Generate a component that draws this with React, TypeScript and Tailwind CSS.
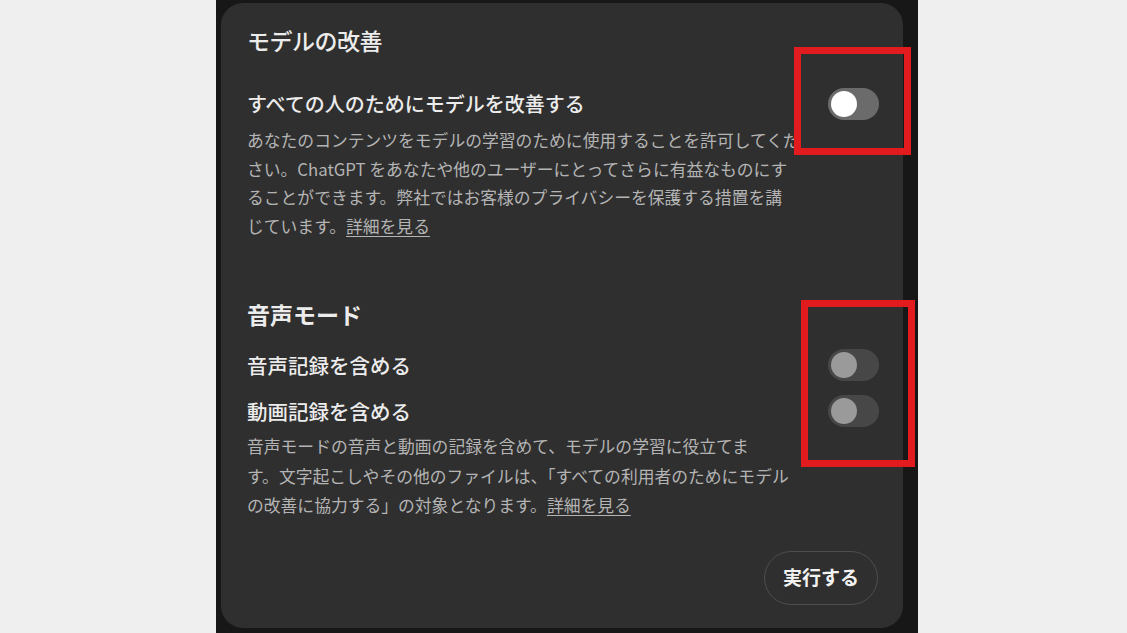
import React from "react";

function Toggle({ disabled }: { disabled?: boolean }) {
  return (
    <div
      className={
        "flex h-[32px] w-[51px] shrink-0 items-center rounded-full px-[3px] " +
        (disabled ? "bg-[#474747]" : "bg-[#6b6b6b]")
      }
    >
      <div
        className={
          "h-[26px] w-[26px] rounded-full " + (disabled ? "bg-[#9a9a9a]" : "bg-white")
        }
      />
    </div>
  );
}

export default function App() {
  const font = {
    fontFamily: '"Noto Sans CJK JP", "Noto Sans", sans-serif',
  } as React.CSSProperties;
  return (
    <div
      className="relative flex h-[633px] w-[1127px] overflow-hidden bg-[#efefef]"
      style={font}
    >
      <div className="w-[216px] shrink-0" />
      <div className="flex w-[702px] shrink-0 bg-[#171717] pl-[5px] pt-[3px]">
        <div className="flex h-[625px] w-[682px] flex-col rounded-[22px] bg-[#2f2f2f] pl-[26px] pr-[24px] pt-[21px] text-[#ececec]">
          <div className="text-[23px] leading-[32px] font-medium tracking-[-0.5px]">
            モデルの改善
          </div>
          <div className="mt-[32px] flex items-center justify-between">
            <div className="text-[20px] leading-[30px] font-medium">
              すべての人のためにモデルを改善する
            </div>
            <Toggle />
          </div>
          <div className="mt-[6px] whitespace-nowrap text-[16.8px] leading-[28.5px] text-[#b4b4b4]">
            <div>あなたのコンテンツをモデルの学習のために使用することを許可してくだ</div>
            <div>さい。ChatGPT をあなたや他のユーザーにとってさらに有益なものにす</div>
            <div>ることができます。弊社ではお客様のプライバシーを保護する措置を講</div>
            <div>
              じています。<span className="underline underline-offset-[3px]">詳細を見る</span>
            </div>
          </div>
          <div className="mt-[58px] text-[23px] leading-[32px] font-bold">音声モード</div>
          <div className="mt-[19px] flex items-center justify-between">
            <div className="text-[20.5px] leading-[30px] font-medium">音声記録を含める</div>
            <Toggle disabled />
          </div>
          <div className="mt-[14px] flex items-center justify-between">
            <div className="text-[20.5px] leading-[30px] font-medium">動画記録を含める</div>
            <Toggle disabled />
          </div>
          <div className="mt-[5px] whitespace-nowrap text-[16.8px] leading-[29.5px] text-[#b4b4b4]">
            <div>音声モードの音声と動画の記録を含めて、モデルの学習に役立てま</div>
            <div>す。文字起こしやその他のファイルは、「すべての利用者のためにモデル</div>
            <div>
              の改善に協力する」の対象となります。<span className="underline underline-offset-[3px]">詳細を見る</span>
            </div>
          </div>
          <div className="mt-[30px] flex justify-end pr-[1px]">
            <button className="h-[54px] rounded-full border border-[#4e4e4e] px-[18px] text-[19px] font-bold text-[#f2f2f2]">
              実行する
            </button>
          </div>
        </div>
      </div>
      <div className="flex-1" />
      <div className="absolute left-[794px] top-[47px] h-[108px] w-[117px] border-[7px] border-[#e11b1e]" />
      <div className="absolute left-[801px] top-[300px] h-[167px] w-[114px] border-[7px] border-[#e11b1e]" />
    </div>
  );
}
